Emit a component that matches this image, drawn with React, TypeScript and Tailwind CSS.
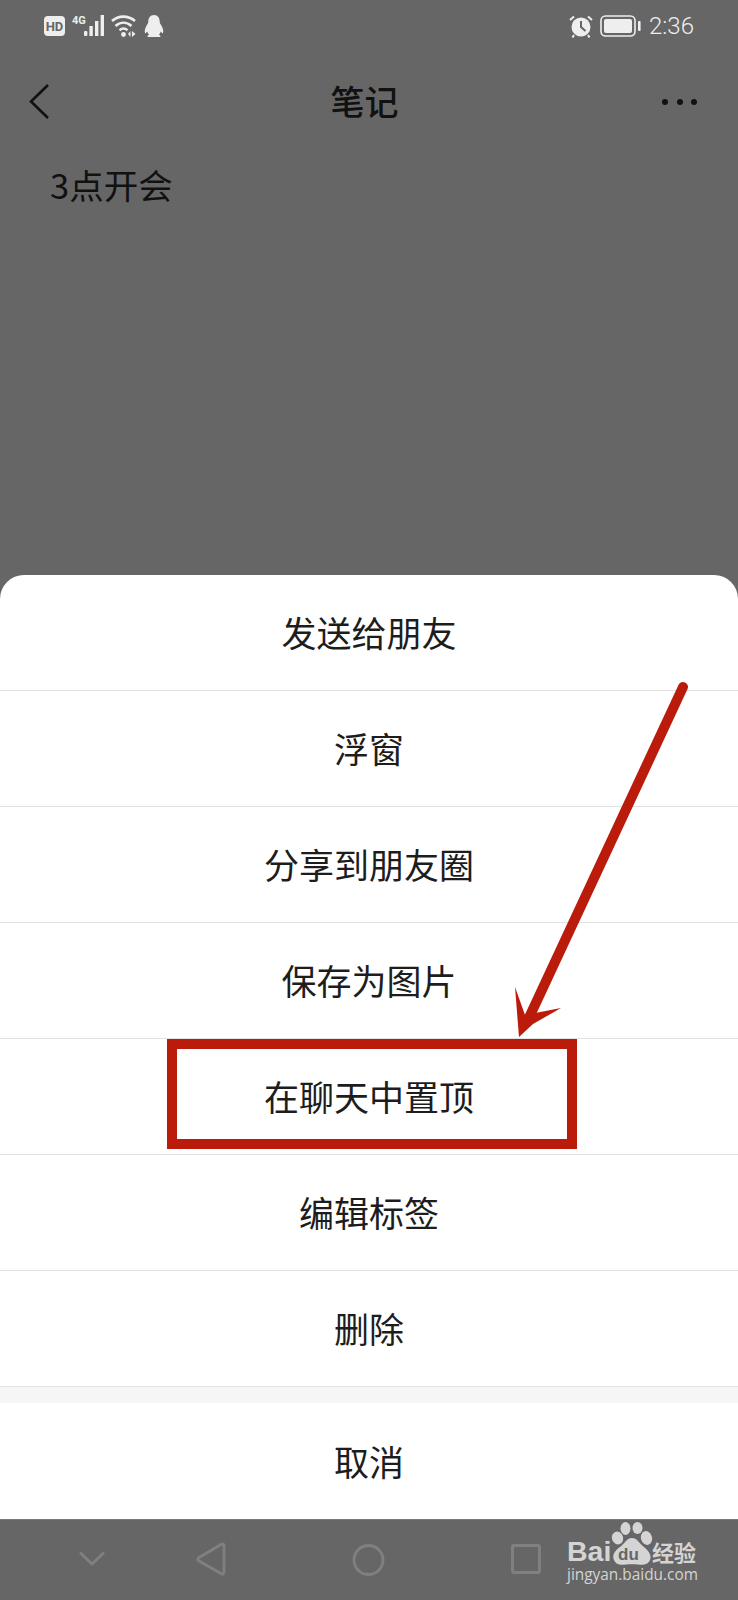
const cjk = "font-['Noto_Sans_CJK_SC','Noto_Sans',sans-serif]";

const rows = ["发送给朋友", "浮窗", "分享到朋友圈", "保存为图片", "在聊天中置顶", "编辑标签", "删除"];

function StatusLeft() {
  return (
    <div className="flex items-center">
      <span className="flex h-[20px] w-[21px] items-center justify-center rounded-[4px] bg-[#eeeeee] font-['Roboto',sans-serif] text-[13px] font-bold leading-none text-[#666666]">HD</span>
      <svg width="35" height="24" viewBox="0 0 35 24" className="ml-[7px]">
        <text x="0" y="10" fontSize="11" fontWeight="700" fill="#eeeeee" fontFamily="Roboto, sans-serif">4G</text>
        <g fill="#eeeeee">
          <rect x="12" y="17" width="3.4" height="5" rx="1" />
          <rect x="17.4" y="12" width="3.4" height="10" />
          <rect x="23" y="7" width="3.4" height="15" />
          <rect x="28.6" y="1" width="3.4" height="21" />
        </g>
      </svg>
      <svg width="27" height="24" viewBox="0 0 27 24" className="ml-[4px]" fill="none">
        <path d="M1 7C7.5 1.2 17 1.2 24 7" stroke="#eeeeee" strokeWidth="2.6" />
        <path d="M4.5 12C9.5 7.6 15.5 7.6 20.5 12" stroke="#eeeeee" strokeWidth="2.6" />
        <path d="M8.5 16.2C11 14.2 14 14.2 16.5 16.2" stroke="#eeeeee" strokeWidth="2.4" />
        <circle cx="12.5" cy="20.5" r="2.4" fill="#eeeeee" />
        <path d="M19.5 17V23L17 20ZM21 17V23L24.5 20Z" fill="#eeeeee" />
      </svg>
      <svg width="20" height="24" viewBox="0 0 20 24" className="ml-[6px]">
        <path d="M10 1C6 1 4.4 4 4.3 7.4C4.2 9.2 3.5 10 2.6 11.6C1.2 14 0.2 17 1 19C1.6 19.6 2.6 18.6 3.2 17.6C3.6 19 4.2 20 5 20.8C3.8 21.4 3.4 22 3.6 23L16.4 23C16.6 22 16.2 21.4 15 20.8C15.8 20 16.4 19 16.8 17.6C17.4 18.6 18.4 19.6 19 19C19.8 17 18.8 14 17.4 11.6C16.5 10 15.8 9.2 15.7 7.4C15.6 4 14 1 10 1Z" fill="#eeeeee" />
      </svg>
    </div>
  );
}

function StatusRight() {
  return (
    <div className="flex items-center">
      <svg width="24" height="24" viewBox="0 0 24 24">
        <circle cx="12" cy="13" r="9.5" fill="#eeeeee" />
        <path d="M12 7V13L16.5 17" fill="none" stroke="#666666" strokeWidth="2" />
        <path d="M1 6L5 2.5M23 6L19 2.5" stroke="#eeeeee" strokeWidth="2" />
        <path d="M5 21L3.5 23.5M19 21L20.5 23.5" stroke="#eeeeee" strokeWidth="2" />
      </svg>
      <svg width="41" height="22" viewBox="0 0 41 22" className="ml-[7px]" fill="none">
        <rect x="1" y="1" width="34" height="20" rx="4.5" stroke="#eeeeee" strokeWidth="1.6" />
        <rect x="4" y="4" width="28" height="14" rx="2" fill="#eeeeee" />
        <rect x="38" y="6" width="2.6" height="10" rx="1" fill="#eeeeee" />
      </svg>
      <span className="ml-[8px] font-['Roboto',sans-serif] text-[24px] font-light leading-none text-[#eeeeee]">2:36</span>
    </div>
  );
}

function BaiduLogo() {
  return (
    <div className="absolute left-[567px] top-[1519px] h-[70px] w-[135px] text-[#d4d4d4]">
      <svg width="42" height="44" viewBox="0 0 42 44" className="absolute left-[44px] top-[3px]" fill="#d4d4d4">
        <ellipse cx="6.5" cy="16" rx="5.5" ry="6.5" transform="rotate(-20 6.5 16)" />
        <ellipse cx="14.5" cy="6.5" rx="5" ry="6.5" />
        <ellipse cx="26.5" cy="6" rx="5" ry="6" />
        <ellipse cx="35.5" cy="16" rx="5.5" ry="7" transform="rotate(-15 35.5 16)" />
        <path d="M21 16C16 16 14 21 9 25C3 29 1 34 3 38C5 43 10 43 15 42.5C19 42 23 42 27 42.5C32 43 37 43 39 38C41 34 38 29 33 25C28 21 26 16 21 16Z" />
      </svg>
      <span className="absolute left-[0px] top-[15px] font-['Liberation_Sans',sans-serif] text-[28.5px] font-bold leading-[34px]">Bai</span>
      <span className="absolute left-[51px] top-[27px] font-['Liberation_Sans',sans-serif] text-[17px] font-bold leading-[17px] text-[#666666]">du</span>
      <span className={`absolute left-[85px] top-[18px] ${cjk} text-[22px] font-bold leading-[28px]`}>经验</span>
      <span className="absolute left-[0px] top-[46px] font-['Open_Sans',sans-serif] text-[15.4px] leading-[20px]">jingyan.baidu.com</span>
    </div>
  );
}

export default function App() {
  return (
    <div className={`relative flex h-[1600px] w-[738px] flex-col overflow-hidden bg-[#666666] ${cjk}`}>
      <div className="flex h-[52px] items-center justify-between pl-[44px] pr-[44px]">
        <StatusLeft />
        <StatusRight />
      </div>
      <div className="relative flex h-[98px] items-center justify-center pr-[9px]">
        <svg width="22" height="38" viewBox="0 0 22 38" className="absolute left-[29px] top-[31px]" fill="none">
          <path d="M19 2L2 18.5L19 35" stroke="#111111" strokeWidth="2.6" />
        </svg>
        <span className="text-[34px] font-medium leading-[44px] text-[#111111]">笔记</span>
        <div className="absolute left-[662px] top-[47px] flex gap-[8.5px]">
          <span className="h-[6px] w-[6px] rounded-full bg-[#111111]" />
          <span className="h-[6px] w-[6px] rounded-full bg-[#111111]" />
          <span className="h-[6px] w-[6px] rounded-full bg-[#111111]" />
        </div>
      </div>
      <div className="flex-1 pl-[50px] pt-[13px] text-[34.5px] leading-[42px] text-[#111111]">3点开会</div>

      <div className="overflow-hidden rounded-t-[24px] bg-white">
        {rows.map((r) => (
          <div key={r} className="flex h-[116px] items-center justify-center border-b border-[#e2e2e2] pb-[1px] text-[35px] leading-[46px] text-[#1d1d1d]">
            {r}
          </div>
        ))}
        <div className="h-[16px] bg-[#f6f6f6]" />
        <div className="flex h-[116px] items-center justify-center text-[35px] leading-[46px] text-[#1d1d1d]">取消</div>
      </div>

      <div className="flex h-[81px] items-start border-t border-[#7a7a7a]">
        <svg width="400" height="60" viewBox="0 0 400 60" className="ml-[70px] mt-[12px]" fill="none" stroke="#808080" strokeWidth="2.8">
          <path d="M10 20.5L22 32L34 20.5" />
          <path d="M154 14V40Q154 43 151 41.5L129 29Q126.5 27.5 129 25.5L151 12.5Q154 11 154 14Z" strokeLinejoin="round" />
          <circle cx="298.5" cy="28" r="14.5" />
        </svg>
        <div className="ml-[41px] mt-[24px] h-[30px] w-[30px] rounded-[3px] border-[3px] border-[#808080]" />
      </div>

      <BaiduLogo />

      <div className="absolute left-[167px] top-[1039px] h-[110px] w-[410px] border-[10px] border-[#bb1b0b]" />
      <svg width="738" height="1600" viewBox="0 0 738 1600" className="pointer-events-none absolute left-0 top-0" fill="none">
        <path d="M683 687L527 1022" stroke="#bb1b0b" strokeWidth="10" strokeLinecap="round" />
        <path d="M519 1037L515 987L525 1015L561 1008L533 1024Z" fill="#bb1b0b" />
      </svg>
    </div>
  );
}
